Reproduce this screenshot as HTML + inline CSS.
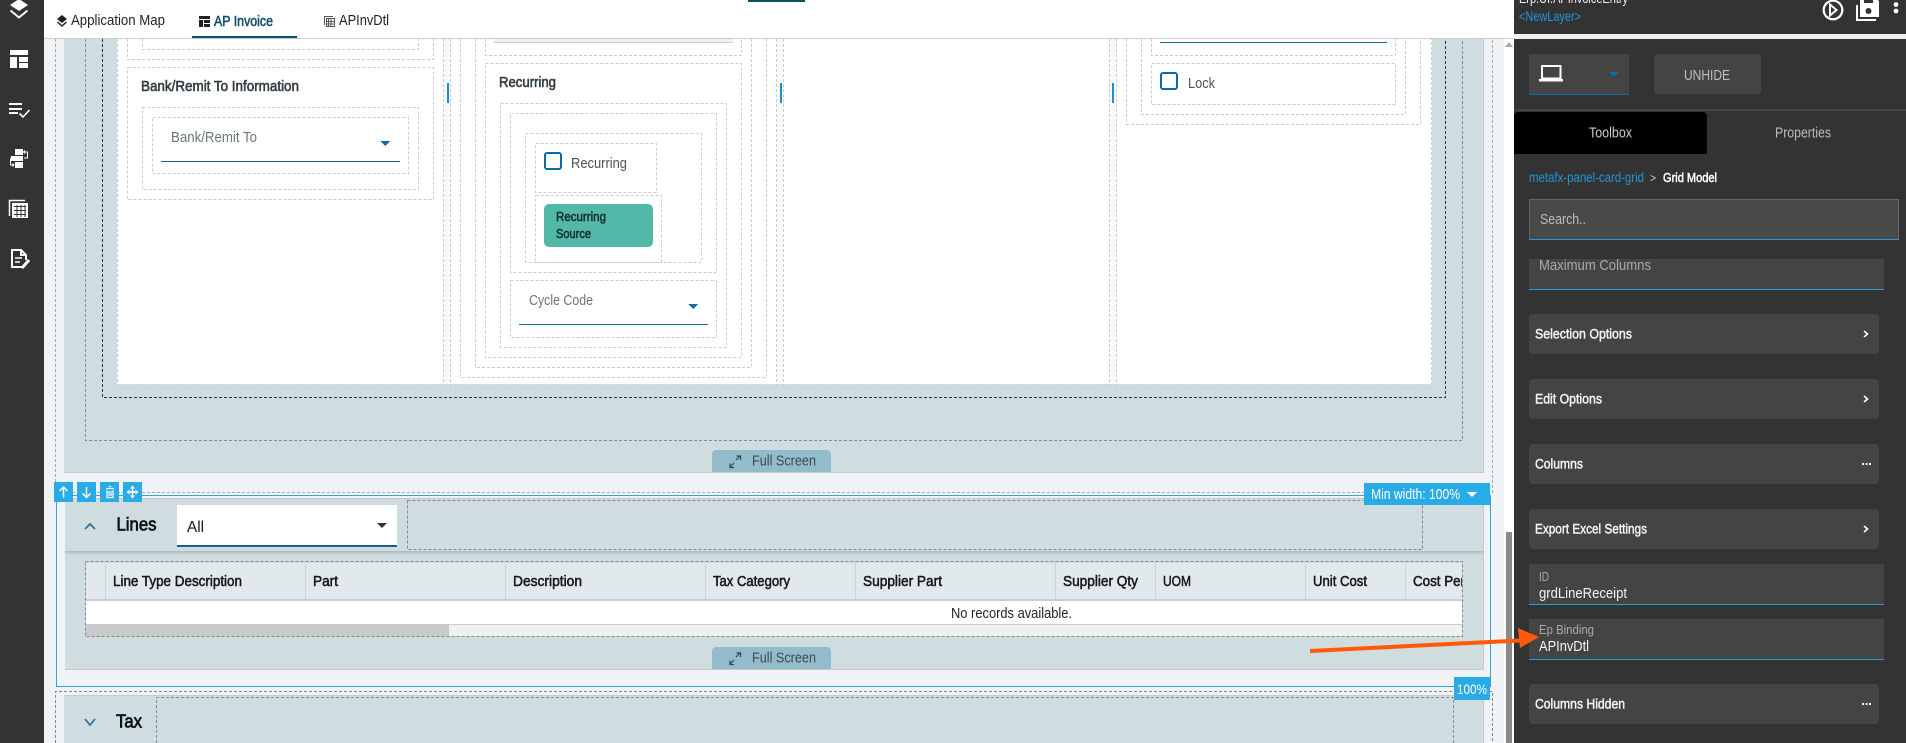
<!DOCTYPE html>
<html lang="en"><head><meta charset="utf-8"><title>AP Invoice</title>
<style>
html,body{margin:0;padding:0;width:1906px;height:743px;overflow:hidden;background:#fff}
svg{display:block;font-family:"Liberation Sans",sans-serif}
.c{shape-rendering:crispEdges}
.d{fill:none;stroke:#ccc;stroke-width:1;stroke-dasharray:3 2}
.g{fill:none;stroke:#888;stroke-width:1;stroke-dasharray:3 2}
.k{fill:none;stroke:#333;stroke-width:1;stroke-dasharray:3 2}
.b{fill:none;stroke:#3ea0d8;stroke-width:1}
.th{font-size:15px;fill:#151a1e;stroke:#151a1e;stroke-width:.55px}
.sec{font-size:14px;fill:#f4f4f4;stroke:#f4f4f4;stroke-width:.45px}
.lbl{font-size:15px;fill:#6a757c}
.ttl{font-size:15px;fill:#333c42;stroke:#333c42;stroke-width:.6px}
.w{fill:#fff}
</style></head><body>
<svg width="1906" height="743" viewBox="0 0 1906 743" xmlns="http://www.w3.org/2000/svg" lengthAdjust="spacingAndGlyphs">
<defs>
<clipPath id="grid"><rect x="85" y="562" width="1377" height="75"/></clipPath>
<linearGradient id="sh" x1="0" y1="0" x2="0" y2="1"><stop offset="0" stop-color="#a9b8be"/><stop offset="1" stop-color="#cfdce0"/></linearGradient>
</defs>
<g class="c">
<!-- backgrounds -->
<rect x="44" y="39" width="1460" height="704" fill="#eff3f6"/>
<rect x="1504" y="39" width="10" height="704" fill="#fff"/>
<rect x="1506" y="532" width="6" height="211" fill="#8a8a8a"/>
<polygon points="1505,47 1509,42 1513,47" fill="#aaa"/>
<!-- upper teal panel -->
<rect x="64" y="39" width="1420" height="433" fill="#cfdce0"/>
<rect x="64" y="472" width="1420" height="1" fill="#c9c9c9"/>
<rect x="1483" y="39" width="1" height="433" fill="#c9c9c9"/>
<rect x="117" y="39" width="1315" height="345" fill="#fff"/>
<rect x="444" y="39" width="7" height="345" fill="#f9f9f9"/>
<rect x="777" y="39" width="7" height="345" fill="#f9f9f9"/>
<rect x="1109" y="39" width="8" height="345" fill="#f9f9f9"/>
<!-- outer dashes -->
<path class="d" style="stroke:#aaa" d="M55.5 39V492.5H1492.5V39"/>
<path class="g" d="M85.5 39V440.5H1462.5V39"/>
<path class="k" d="M102.5 39V397.5H1445.5V39"/>
<path class="d" style="stroke:#c5d2d4" d="M117.5 39V387.5H1431.5V39"/>
<!-- gutters -->
<path class="d" d="M443.5 39V387M450.5 39V387M776.5 39V387M783.5 39V387M1109.5 39V387M1116.5 39V387"/>
<rect x="447" y="83" width="2" height="20" fill="#1a8ecf"/>
<rect x="780" y="83" width="2" height="20" fill="#1a8ecf"/>
<rect x="1112" y="83" width="2" height="20" fill="#1a8ecf"/>
<!-- column 1 -->
<path class="d" d="M127.5 39V59.5H433.5V39"/>
<path class="d" d="M142.5 39V49.5H418.5V39"/>
<rect class="d" x="127.5" y="67.5" width="306" height="132"/>
<rect class="d" x="142.5" y="107.5" width="276" height="82"/>
<rect class="d" x="152.5" y="117.5" width="256" height="56"/>
<rect x="161" y="161" width="239" height="1" fill="#1a5f86"/>
<polygon points="380,141 390,141 385,146" fill="#0f6ca6"/>
<!-- column 2 -->
<path class="d" d="M460.5 39V377.5H766.5V39"/>
<path class="d" d="M475.5 39V367.5H751.5V39"/>
<path class="d" d="M485.5 39V55.5H741.5V39"/>
<rect x="494" y="39" width="239" height="3" fill="#f0f0f0"/><rect x="494" y="42" width="239" height="1" fill="#ccc"/>
<rect class="d" x="485.5" y="63.5" width="256" height="294"/>
<rect class="d" x="500.5" y="103.5" width="226" height="244"/>
<rect class="d" x="510.5" y="113.5" width="206" height="159"/>
<rect class="d" x="525.5" y="133.5" width="176" height="129"/>
<rect class="d" x="535.5" y="143.5" width="121" height="49"/>
<rect class="d" x="535.5" y="195.5" width="126" height="67"/>
<rect class="d" x="510.5" y="280.5" width="206" height="57"/>
<rect x="545" y="153" width="16" height="16" rx="2" fill="none" stroke="#0f6ca6" stroke-width="2"/>
<rect x="519" y="324" width="189" height="1" fill="#1a6f9e"/>
<polygon points="688,304 698,304 693,309" fill="#0f6ca6"/>
<!-- column 4 -->
<path class="d" d="M1126.5 39V124.5H1420.5V39"/>
<path class="d" d="M1141.5 39V114.5H1405.5V39"/>
<path class="d" d="M1151.5 39V55.5H1395.5V39"/>
<rect class="d" x="1151.5" y="63.5" width="244" height="41"/>
<rect x="1160" y="42" width="227" height="1" fill="#0f6ca6"/>
<rect x="1161" y="73" width="16" height="16" rx="2" fill="none" stroke="#0f6ca6" stroke-width="2"/>
<!-- full screen 1 -->
<path d="M712 472V454a4 4 0 0 1 4-4H827a4 4 0 0 1 4 4V472Z" fill="#92bccb"/>
<!-- lines section -->
<rect x="65" y="498" width="1419" height="171" fill="#cfdce0"/>
<rect x="65" y="669" width="1419" height="1" fill="#c9c9c9"/>
<rect x="1483" y="498" width="1" height="171" fill="#c9c9c9"/>
<rect x="65" y="498" width="1418" height="1" fill="#bcc8cc"/>
<rect x="65" y="551" width="1418" height="4" fill="url(#sh)"/>
<path d="M712 669V651a4 4 0 0 1 4-4H827a4 4 0 0 1 4 4V669Z" fill="#92bccb"/>
<rect x="177" y="505" width="220" height="41" fill="#fff"/>
<rect x="177" y="545" width="220" height="2" fill="#17608e"/>
<rect class="g" x="407.5" y="500.5" width="1015" height="49"/>
<!-- grid -->
<rect x="86" y="563" width="1376" height="36" fill="#e2e9ec"/>
<rect x="86" y="599" width="1376" height="2" fill="#ccc"/>
<rect x="86" y="601" width="1376" height="23" fill="#fff"/>
<rect x="86" y="624" width="1376" height="1" fill="#ccc"/>
<rect x="86" y="625" width="1376" height="11" fill="#f0f0f0"/>
<rect x="86" y="625" width="363" height="11" fill="#c9c9c9"/>
<path d="M105.5 563V599M305.5 563V599M505.5 563V599M705.5 563V599M855.5 563V599M1055.5 563V599M1155.5 563V599M1305.5 563V599M1405.5 563V599" stroke="#ccd3d6" stroke-width="1" fill="none"/>
<rect class="g" x="85.5" y="561.5" width="1377" height="75"/>
<!-- selection box -->
<rect class="b" x="56.5" y="495.5" width="1434" height="191"/>
<!-- tax -->
<rect x="64" y="695" width="1420" height="48" fill="#cfdce0"/>
<rect x="64" y="695" width="1420" height="1" fill="#c9c9c9"/>
<rect x="1483" y="695" width="1" height="48" fill="#c9c9c9"/>
<path class="g" d="M55.5 743V691.5H1492.5V743"/>
<path class="g" d="M156.5 743V697.5H1453.5V743"/>
<!-- tool buttons -->
<rect x="54" y="482" width="19" height="20" fill="#29abe8"/>
<rect x="77" y="482" width="19" height="20" fill="#29abe8"/>
<rect x="100" y="482" width="19" height="20" fill="#29abe8"/>
<rect x="123" y="482" width="19" height="20" fill="#29abe8"/>
<rect x="1364" y="483" width="126" height="22" fill="#29abe8"/>
<rect x="1454" y="677" width="36" height="23" fill="#29abe8"/>
<!-- top bar -->
<rect x="44" y="0" width="1470" height="38" fill="#fff"/>
<rect x="44" y="38" width="1470" height="1" fill="#ccc"/>
<rect x="748" y="0" width="57" height="2" fill="#0b4f62"/>
<rect x="192" y="36" width="105" height="2" fill="#0d5075"/>
<!-- sidebar -->
<rect x="0" y="0" width="44" height="743" fill="#333"/>
<!-- right panel -->
<rect x="1514" y="0" width="392" height="743" fill="#333"/>
<rect x="1514" y="34" width="392" height="5" fill="#f0f0f0"/>
<rect x="1514" y="109" width="392" height="2" fill="#444"/>
<rect x="1529" y="54" width="100" height="41" fill="#444"/><rect x="1529" y="94" width="100" height="1" fill="#0f6ca6"/>
<rect x="1654" y="54" width="107" height="40" rx="4" fill="#444"/>
<path d="M1514 154V116a4 4 0 0 1 4-4H1703a4 4 0 0 1 4 4V154Z" fill="#000"/>
<rect x="1529.5" y="199.5" width="369" height="40" fill="#494949" stroke="#666"/>
<rect x="1529" y="239" width="370" height="1" fill="#2a9ad8"/>
<rect x="1529" y="259" width="355" height="31" fill="#444"/><rect x="1529" y="289" width="355" height="1" fill="#2a9ad8"/>
<rect x="1529" y="314" width="350" height="40" rx="4" fill="#444"/>
<rect x="1529" y="379" width="350" height="40" rx="4" fill="#444"/>
<rect x="1529" y="444" width="350" height="40" rx="4" fill="#444"/>
<rect x="1529" y="509" width="350" height="40" rx="4" fill="#444"/>
<rect x="1529" y="564" width="355" height="41" fill="#444"/><rect x="1529" y="604" width="355" height="1" fill="#2a9ad8"/>
<rect x="1529" y="619" width="355" height="41" fill="#444"/><rect x="1529" y="659" width="355" height="1" fill="#2a9ad8"/>
<rect x="1529" y="684" width="350" height="40" rx="4" fill="#444"/>
</g>

<!-- sidebar icons -->
<polygon points="19,-1 28,5 19,11 10,5" fill="#fff"/>
<path d="M10.5 10.500L19 17.500l8.500-7" fill="none" stroke="#fff" stroke-width="2"/>
<g class="c" fill="#fff">
<rect x="10" y="50" width="18" height="5"/><rect x="10" y="57" width="7" height="11"/><rect x="19" y="57" width="9" height="5"/><rect x="19" y="63" width="9" height="5"/>
<rect x="9" y="103" width="13" height="2"/><rect x="9" y="108" width="13" height="2"/><rect x="9" y="112" width="9" height="2"/>
<rect x="15" y="149" width="8" height="6"/><rect x="11" y="156" width="12" height="5"/><rect x="15" y="162" width="8" height="6"/>
<rect x="12" y="203" width="16" height="15"/>
</g>
<path d="M19.5 113.5l3.5 3.5 6.5-7" fill="none" stroke="#fff" stroke-width="1.6"/>
<path d="M24 152H27.500V158H24M14 158.500H10.500V165H14" fill="none" stroke="#fff" stroke-width="1"/>
<path d="M25 150.500L23.500 152 25 153.500M12.500 163.500L14 165 12.500 166.500" fill="none" stroke="#fff" stroke-width="1"/>
<path d="M25 200.500H9.500V216" fill="none" stroke="#fff" stroke-width="1.500"/>
<path d="M14 206.500h12M14 210.500h12M14 214.500h12M17 205v12M21 205v12M25 205v12" stroke="#333" stroke-width="1"/>
<path d="M22 267H12V250h9l5 5v5M21 250v5h5" fill="none" stroke="#fff" stroke-width="2"/>
<path d="M15 258h7M15 262h5" stroke="#fff" stroke-width="1.500"/>
<path d="M22 268l7-8" stroke="#fff" stroke-width="3"/>

<!-- tab icons -->
<polygon points="62,15 67,19 62,23 57,19" fill="#222"/><path d="M57.500 22l4.500 4 4.500-4" fill="none" stroke="#222" stroke-width="1.500"/>
<g class="c" fill="#222">
<rect x="199" y="16" width="11" height="3"/><rect x="199" y="20" width="4" height="7"/><rect x="204" y="20" width="6" height="3"/><rect x="204" y="24" width="6" height="3"/>
</g>
<rect x="326.500" y="18.500" width="8" height="8" fill="none" stroke="#555"/><path d="M324.500 25V16.500H333M328.500 19v7M331 19v7M327 21.500h7M327 24h7" stroke="#555" fill="none" stroke-width="1"/>

<!-- tabs text -->
<text x="71" y="25" font-size="15" fill="#1c2226" textLength="94" lengthAdjust="spacingAndGlyphs">Application Map</text>
<text x="214" y="26" font-size="15" fill="#14506e" stroke="#14506e" stroke-width=".6" textLength="59" lengthAdjust="spacingAndGlyphs">AP Invoice</text>
<text x="339" y="25" font-size="15" fill="#1c2226" textLength="50" lengthAdjust="spacingAndGlyphs">APInvDtl</text>

<!-- form text -->
<text x="141" y="91" class="ttl" textLength="158" lengthAdjust="spacingAndGlyphs">Bank/Remit To Information</text>
<text x="171" y="142" class="lbl" textLength="86" lengthAdjust="spacingAndGlyphs">Bank/Remit To</text>
<text x="499" y="87" class="ttl" textLength="57" lengthAdjust="spacingAndGlyphs">Recurring</text>
<text x="571" y="168" font-size="15" fill="#4a5358" textLength="56" lengthAdjust="spacingAndGlyphs">Recurring</text>
<rect x="544" y="204" width="109" height="43" rx="5" fill="#52b8a8"/>
<text x="556" y="221" font-size="13" fill="#16302c" stroke="#16302c" stroke-width=".55" textLength="50" lengthAdjust="spacingAndGlyphs">Recurring</text>
<text x="556" y="238" font-size="13" fill="#16302c" stroke="#16302c" stroke-width=".55" textLength="35" lengthAdjust="spacingAndGlyphs">Source</text>
<text x="529" y="305" class="lbl" textLength="64" lengthAdjust="spacingAndGlyphs">Cycle Code</text>
<text x="1188" y="88" font-size="15" fill="#4a5358" textLength="27" lengthAdjust="spacingAndGlyphs">Lock</text>

<!-- full screen -->
<g fill="none" stroke="#33444d" stroke-width="1.200">
<path d="M730 467l4-4M730 463.500V467.500H734M740 456l-4 4M736.500 456H740.500V460"/>
<path d="M730 664l4-4M730 660.500V664.500H734M740 653l-4 4M736.500 653H740.500V657"/>
</g>
<text x="752" y="465.500" font-size="14.500" fill="#3b4a52" textLength="64" lengthAdjust="spacingAndGlyphs">Full Screen</text>
<text x="752" y="662.500" font-size="14.500" fill="#3b4a52" textLength="64" lengthAdjust="spacingAndGlyphs">Full Screen</text>

<!-- lines -->
<path d="M85 529l5-5 5 5" fill="none" stroke="#2b7199" stroke-width="1.700"/>
<text x="116.500" y="530.500" font-size="18" fill="#0d1214" stroke="#0d1214" stroke-width=".7" textLength="40" lengthAdjust="spacingAndGlyphs">Lines</text>
<text x="187" y="532" font-size="16" fill="#14191c" textLength="17" lengthAdjust="spacingAndGlyphs">All</text>
<polygon points="377,523 387,523 382,528" fill="#333"/>

<g clip-path="url(#grid)">
<text x="113" y="586" class="th" textLength="129" lengthAdjust="spacingAndGlyphs">Line Type Description</text>
<text x="313" y="586" class="th" textLength="25" lengthAdjust="spacingAndGlyphs">Part</text>
<text x="513" y="586" class="th" textLength="69" lengthAdjust="spacingAndGlyphs">Description</text>
<text x="713" y="586" class="th" textLength="77" lengthAdjust="spacingAndGlyphs">Tax Category</text>
<text x="863" y="586" class="th" textLength="79" lengthAdjust="spacingAndGlyphs">Supplier Part</text>
<text x="1063" y="586" class="th" textLength="75" lengthAdjust="spacingAndGlyphs">Supplier Qty</text>
<text x="1163" y="586" class="th" textLength="28" lengthAdjust="spacingAndGlyphs">UOM</text>
<text x="1313" y="586" class="th" textLength="54" lengthAdjust="spacingAndGlyphs">Unit Cost</text>
<text x="1413" y="586" class="th" textLength="52" lengthAdjust="spacingAndGlyphs">Cost Per</text>
</g>
<text x="951" y="618" font-size="15" fill="#1c2226" textLength="121" lengthAdjust="spacingAndGlyphs">No records available.</text>

<!-- tax -->
<path d="M85 719l5 6 5-6" fill="none" stroke="#2b7199" stroke-width="1.700"/>
<text x="116" y="727.500" font-size="18" fill="#0d1214" stroke="#0d1214" stroke-width=".7" textLength="26" lengthAdjust="spacingAndGlyphs">Tax</text>

<!-- tool button glyphs -->
<g fill="none" stroke="#fff" stroke-width="1.500">
<path d="M63.500 497.500V487M59.500 491l4-4 4 4"/>
<path d="M86.500 487V497.500M82.500 493.500l4 4 4-4"/>
<path d="M106 488.500h8M107 490v7.500h6V490M109 486.500h2M109 491v5M111 491v5" stroke-width="1.200"/>
</g>
<path d="M132.500 485.500l-2.500 3h5zM132.500 498.500l-2.500-3h5zM126.500 492l3-2.500v5zM138.500 492l-3-2.500v5z" fill="#fff"/>
<path d="M132.500 487v10M128 492h9" stroke="#fff" stroke-width="1.500"/>

<text x="1371" y="499" font-size="15" fill="#fff" textLength="89" lengthAdjust="spacingAndGlyphs">Min width: 100%</text>
<polygon points="1467,492 1477,492 1472,497" fill="#fff"/>
<text x="1457" y="694" font-size="14" fill="#fff" textLength="30" lengthAdjust="spacingAndGlyphs">100%</text>

<!-- arrow -->
<path d="M1310 651L1520 640.500" stroke="#ff5a0a" stroke-width="4" fill="none"/>
<polygon points="1518,628 1539,637 1520,648" fill="#ff5a0a"/>

<!-- right panel text -->
<text x="1519" y="3" font-size="14" fill="#f0f0f0" textLength="109" lengthAdjust="spacingAndGlyphs">Erp.UI.APInvoiceEntry</text>
<text x="1519" y="21" font-size="14" fill="#2196d9" textLength="62" lengthAdjust="spacingAndGlyphs">&lt;NewLayer&gt;</text>
<circle cx="1833" cy="10" r="9.300" fill="none" stroke="#fff" stroke-width="2.200"/>
<path d="M1830 4.500l6.500 5.500-6.500 5.500z" fill="none" stroke="#fff" stroke-width="2"/>
<path d="M1857 5V20H1876" fill="none" stroke="#fff" stroke-width="2"/>
<path d="M1860 -2H1876L1879 1V17H1860Z" fill="#fff"/>
<rect x="1864" y="0" width="9" height="3" fill="#333"/>
<circle cx="1868.500" cy="11" r="3" fill="#333"/>
<circle cx="1896" cy="-3" r="2.400" fill="#fff"/><circle cx="1896" cy="4.500" r="2.400" fill="#fff"/><circle cx="1896" cy="11" r="2.400" fill="#fff"/>

<rect x="1542" y="66" width="18.500" height="12.500" fill="none" stroke="#fff" stroke-width="2"/>
<rect x="1539" y="79" width="24" height="2.500" fill="#fff"/>
<polygon points="1609,72 1619,72 1614,77" fill="#0f6ca6"/>
<text x="1684" y="80" font-size="15" fill="#bdbdbd" textLength="46" lengthAdjust="spacingAndGlyphs">UNHIDE</text>
<text x="1589" y="137.500" font-size="15" fill="#ccc" textLength="43" lengthAdjust="spacingAndGlyphs">Toolbox</text>
<text x="1775" y="137.500" font-size="15" fill="#bbb" textLength="56" lengthAdjust="spacingAndGlyphs">Properties</text>
<text x="1529" y="182" font-size="14" fill="#2196d9" textLength="115" lengthAdjust="spacingAndGlyphs">metafx-panel-card-grid</text>
<text x="1650" y="182" font-size="12" fill="#ccc" textLength="6" lengthAdjust="spacingAndGlyphs">&gt;</text>
<text x="1663" y="182" font-size="13" fill="#fff" stroke="#fff" stroke-width=".5" textLength="54" lengthAdjust="spacingAndGlyphs">Grid Model</text>
<text x="1540" y="224" font-size="15" fill="#bdbdbd" textLength="46" lengthAdjust="spacingAndGlyphs">Search..</text>
<text x="1539" y="270" font-size="15" fill="#aaa" textLength="112" lengthAdjust="spacingAndGlyphs">Maximum Columns</text>
<text x="1535" y="338.500" class="sec" textLength="97" lengthAdjust="spacingAndGlyphs">Selection Options</text>
<text x="1535" y="403.500" class="sec" textLength="67" lengthAdjust="spacingAndGlyphs">Edit Options</text>
<text x="1535" y="468.500" class="sec" textLength="48" lengthAdjust="spacingAndGlyphs">Columns</text>
<text x="1535" y="533.500" class="sec" textLength="112" lengthAdjust="spacingAndGlyphs">Export Excel Settings</text>
<text x="1535" y="708.500" class="sec" textLength="90" lengthAdjust="spacingAndGlyphs">Columns Hidden</text>
<g fill="none" stroke="#fff" stroke-width="1.600">
<path d="M1864 331l3.500 3-3.500 3"/><path d="M1864 396l3.500 3-3.500 3"/><path d="M1864 526l3.500 3-3.500 3"/>
</g>
<path d="M1862 464h9M1862 704h9" stroke="#fff" stroke-width="2" stroke-dasharray="2 1.500"/>
<text x="1539" y="581" font-size="13" fill="#aaa" textLength="10" lengthAdjust="spacingAndGlyphs">ID</text>
<text x="1539" y="598" font-size="15" fill="#f4f4f4" textLength="88" lengthAdjust="spacingAndGlyphs">grdLineReceipt</text>
<text x="1539" y="634" font-size="13" fill="#aaa" textLength="55" lengthAdjust="spacingAndGlyphs">Ep Binding</text>
<text x="1539" y="651" font-size="15" fill="#f4f4f4" textLength="50" lengthAdjust="spacingAndGlyphs">APInvDtl</text>
</svg>
</body></html>
